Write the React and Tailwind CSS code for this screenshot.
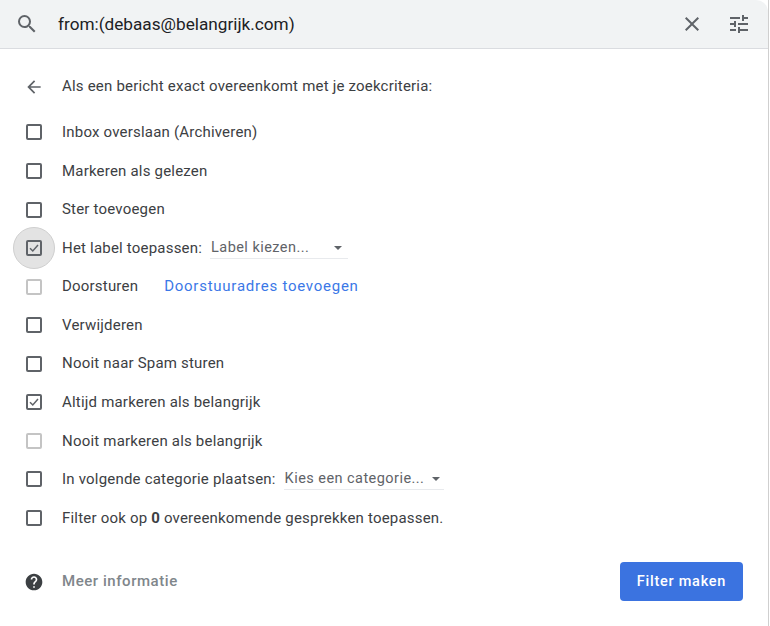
function Icon({ d, size = 24, className = '' }) {
    return (
        <svg width={size} height={size} viewBox="0 0 24 24" fill="currentColor" className={`shrink-0 ${className}`}>
            <path d={d} />
        </svg>
    );
}

const searchPath = 'M15.5 14h-.79l-.28-.27A6.471 6.471 0 0 0 16 9.5 6.5 6.5 0 1 0 9.5 16c1.61 0 3.09-.59 4.23-1.57l.27.28v.79l5 4.99L20.49 19l-4.99-5zm-6 0C7.01 14 5 11.99 5 9.5S7.01 5 9.5 5 14 7.01 14 9.5 11.99 14 9.5 14z';
const closePath = 'M19 6.41L17.59 5 12 10.59 6.41 5 5 6.41 10.59 12 5 17.59 6.41 19 12 13.41 17.59 19 19 17.59 13.41 12z';
const tunePath = 'M3 17v2h6v-2H3zM3 5v2h10V5H3zm10 16v-2h8v-2h-8v-2h-2v6h2zM7 9v2H3v2h4v2h2V9H7zm14 4v-2H11v2h10zm-6-4h2V7h4V5h-4V3h-2v6z';
const backPath = 'M20 11H7.83l5.59-5.59L12 4l-8 8 8 8 1.41-1.41L7.83 13H20v-2z';
const helpPath = 'M12 2C6.48 2 2 6.48 2 12s4.48 10 10 10 10-4.48 10-10S17.52 2 12 2zm1 17h-2v-2h2v2zm2.07-7.75l-.9.92C13.45 12.9 13 13.5 13 15h-2v-.5c0-1.1.45-2.1 1.17-2.83l1.24-1.26c.37-.36.59-.86.59-1.41 0-1.1-.9-2-2-2s-2 .9-2 2H8c0-2.21 1.79-4 4-4s4 1.79 4 4c0 .88-.36 1.68-.93 2.25z';

function Checkbox({ checked, disabled, focus }) {
    return (
        <div className="relative w-4 h-4 shrink-0">
            {focus && <div className="absolute -left-[13px] -top-[13px] w-[42px] h-[42px] rounded-full bg-[#e3e3e3] border border-[#cfcfcf]" />}
            <div className={`relative w-4 h-4 rounded-[2px] border-2 flex items-center justify-center ${disabled ? 'border-[#c4c4c4]' : 'border-[#5f6368]'}`}>
                {checked && (
                    <svg width="12" height="12" viewBox="0 0 12 12" fill="none" stroke="#5f6368" strokeWidth="1.5">
                        <path d="M2 6.2 4.8 9 10 3" />
                    </svg>
                )}
            </div>
        </div>
    );
}

function Select({ text, width, arrowGap }) {
    return (
        <div className={`flex items-center h-[22px] border-b border-[#e8eaed] text-[14.5px] text-[#5f6368] tracking-[0.45px] pl-px ${width}`}>
            <span className={arrowGap}>{text}</span>
            <span className="w-0 h-0 border-x-[4px] border-x-transparent border-t-[4px] border-t-[#5f6368]" />
        </div>
    );
}

function Row({ checked, disabled, focus, children }) {
    return (
        <li className="flex items-center h-[38.55px] pl-[26px] gap-5 text-[15px] tracking-[0.2px] text-[#3c4043]">
            <Checkbox checked={checked} disabled={disabled} focus={focus} />
            {children}
        </li>
    );
}

export default function App() {
    return (
        <div className="w-[769px] h-[626px] bg-white border-r border-[#cfcfcf] flex flex-col font-['Roboto',sans-serif]">
            <div className="flex items-center h-[49px] shrink-0 bg-[#f1f3f4] border-b border-[#dadce0] rounded-tr-xl pl-[15px] pr-[17px]">
                <Icon d={searchPath} size={24} className="text-[#5f6368]" />
                <span className="ml-[19px] pt-[2px] text-[17.2px] text-[#202124] flex-1">from:(debaas@belangrijk.com)</span>
                <Icon d={closePath} size={24} className="text-[#5f6368]" />
                <Icon d={tunePath} size={24} className="ml-[23px] text-[#5f6368]" />
            </div>
            <div className="flex items-center h-[37px] mt-[19px] pl-[24px] gap-[18px] text-[15px] tracking-[0.2px] text-[#3c4043]">
                <Icon d={backPath} size={20} className="text-[#5f6368]" />
                <span>Als een bericht exact overeenkomt met je zoekcriteria:</span>
            </div>
            <ul className="mt-[8.2px]">
                <Row>Inbox overslaan (Archiveren)</Row>
                <Row>Markeren als gelezen</Row>
                <Row>Ster toevoegen</Row>
                <Row checked focus>
                    <span>Het label toepassen:</span>
                    <div className="-ml-[12px]">
                        <Select text="Label kiezen..." width="w-[138px]" arrowGap="mr-[25px]" />
                    </div>
                </Row>
                <Row disabled>
                    <span>Doorsturen</span>
                    <a className="ml-[6px] text-[#3b78e7] tracking-[0.75px]">Doorstuuradres toevoegen</a>
                </Row>
                <Row>Verwijderen</Row>
                <Row>Nooit naar Spam sturen</Row>
                <Row checked>Altijd markeren als belangrijk</Row>
                <Row disabled>Nooit markeren als belangrijk</Row>
                <Row>
                    <span>In volgende categorie plaatsen:</span>
                    <div className="-ml-[12px]">
                        <Select text="Kies een categorie..." width="w-[160px]" arrowGap="mr-[8px]" />
                    </div>
                </Row>
                <Row>
                    <span>Filter ook op <b className="font-bold">0</b> overeenkomende gesprekken toepassen.</span>
                </Row>
            </ul>
            <div className="flex items-center justify-between mt-[24.8px] pl-[24px] pr-[25px]">
                <div className="flex items-center gap-[18px]">
                    <Icon d={helpPath} size={20} className="text-[#3c4043]" />
                    <span className="text-[15px] font-medium tracking-[0.55px] text-[#80868b]">Meer informatie</span>
                </div>
                <button className="w-[123px] h-[39px] rounded-[4px] bg-[#3b73e0] text-white text-[14.5px] font-medium tracking-[0.75px]">Filter maken</button>
            </div>
        </div>
    );
}
